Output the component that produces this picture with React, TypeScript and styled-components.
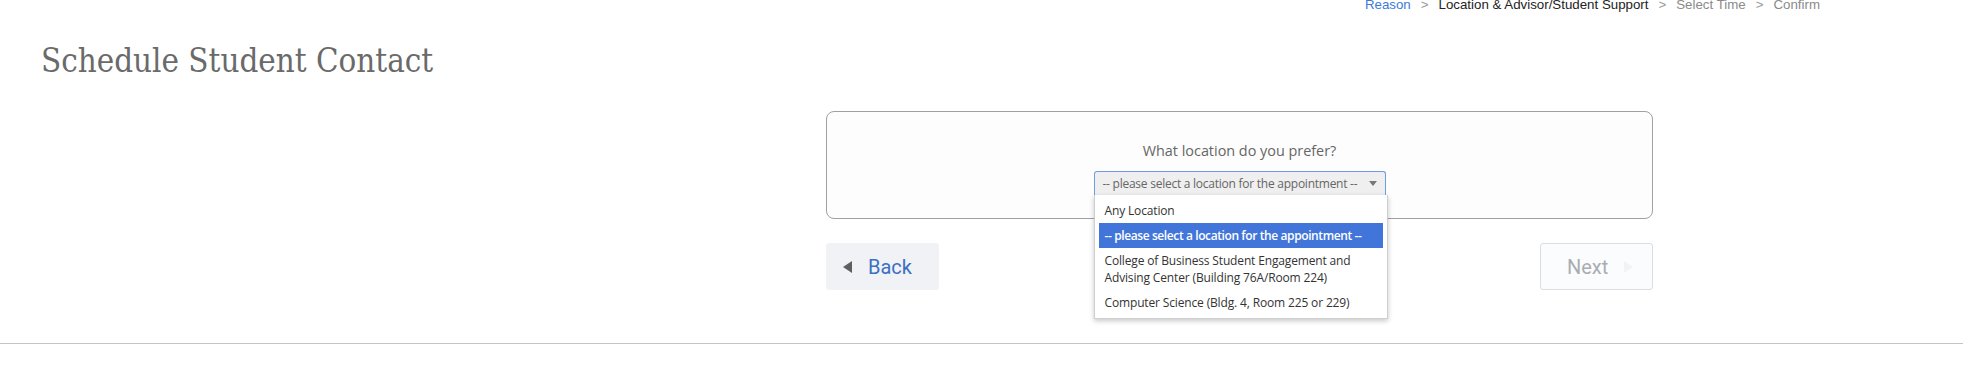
import React from 'react';
import styled, { createGlobalStyle } from 'styled-components';

const GlobalStyle = createGlobalStyle`
  html, body {
    margin: 0;
    padding: 0;
    background: #ffffff;
  }
  * {
    box-sizing: border-box;
  }
`;

const Page = styled.div`
  width: 1963px;
  height: 373px;
  overflow: hidden;
  font-family: 'Open Sans', sans-serif;
`;

const Breadcrumb = styled.nav`
  display: flex;
  justify-content: flex-end;
  margin-top: -3px;
  padding-right: 143px;
  font-family: 'Liberation Sans', Arial, sans-serif;
  font-size: 13.3px;
  line-height: 15px;
`;

const Crumb = styled.span<{ $state: 'done' | 'current' | 'todo' }>`
  color: ${(p) => (p.$state === 'done' ? '#3b7ad9' : p.$state === 'current' ? '#222222' : '#8a8a8a')};
`;

const Sep = styled.span`
  margin: 0 10px;
  color: #999999;
`;

const Title = styled.h1`
  margin: 29px 0 0 41px;
  font-family: 'DejaVu Serif Condensed', 'DejaVu Serif', serif;
  font-stretch: semi-condensed;
  font-weight: normal;
  font-size: 32.8px;
  line-height: 40px;
  color: #6a6a6a;
`;

const Main = styled.div`
  width: 827px;
  margin: 30px 0 0 826px;
`;

const Card = styled.div`
  border: 1px solid #a0a0a0;
  border-radius: 8px;
  background: #fdfdfd;
  padding: 29px 0 23px;
  display: flex;
  flex-direction: column;
  align-items: center;
`;

const Question = styled.div`
  font-size: 14.4px;
  line-height: 20px;
  color: #666666;
`;

const SelectWrap = styled.div`
  position: relative;
  margin-top: 10px;
  width: 292px;
`;

const SelectBox = styled.div`
  height: 24px;
  display: flex;
  align-items: center;
  justify-content: space-between;
  padding: 0 8px 0 8px;
  background: #efefef;
  border: 1px solid #6d9be6;
  border-bottom: none;
  border-radius: 3px 3px 0 0;
  font-size: 12px;
  letter-spacing: -0.25px;
  white-space: nowrap;
  color: #666666;
`;

const Caret = styled.span`
  width: 0;
  height: 0;
  border-left: 4px solid transparent;
  border-right: 4px solid transparent;
  border-top: 5px solid #777777;
`;

const Menu = styled.ul`
  position: absolute;
  top: 100%;
  left: 0;
  width: 294px;
  margin: 0;
  padding: 3px 4px 3px;
  list-style: none;
  background: #ffffff;
  border: 1px solid #cfcfcf;
  border-top: none;
  box-shadow: 0 2px 5px rgba(0, 0, 0, 0.22);
  z-index: 10;
`;

const Option = styled.li<{ $active?: boolean }>`
  padding: 4px 6px;
  font-size: 12px;
  line-height: 17px;
  white-space: ${(p) => (p.$active ? 'nowrap' : 'normal')};
  color: ${(p) => (p.$active ? '#ffffff' : '#333333')};
  background: ${(p) => (p.$active ? '#4275d9' : 'transparent')};
  font-weight: ${(p) => (p.$active ? 600 : 400)};
  letter-spacing: ${(p) => (p.$active ? '-0.4px' : '-0.15px')};
`;

const Actions = styled.div`
  display: flex;
  justify-content: space-between;
  margin-top: 24px;
`;

const NavButton = styled.button<{ $disabled?: boolean }>`
  height: 47px;
  width: 113px;
  display: flex;
  align-items: center;
  gap: 16px;
  border-radius: 3px;
  font-family: Roboto, sans-serif;
  font-size: 20px;
  cursor: pointer;
  border: 1px solid ${(p) => (p.$disabled ? '#dadde1' : '#f0f2f5')};
  background: ${(p) => (p.$disabled ? '#fbfcfd' : '#f0f2f5')};
  color: ${(p) => (p.$disabled ? '#a9adb3' : '#3b6fc3')};
  padding: ${(p) => (p.$disabled ? '0 0 0 26px' : '0 0 0 16px')};
`;

const Arrow = styled.span<{ $dir: 'left' | 'right'; $faint?: boolean }>`
  width: 0;
  height: 0;
  border-top: 6px solid transparent;
  border-bottom: 6px solid transparent;
  ${(p) =>
    p.$dir === 'left'
      ? `border-right: 9px solid ${p.$faint ? '#f1f3f6' : '#5f5f5f'};`
      : `border-left: 9px solid ${p.$faint ? '#f1f3f6' : '#5f5f5f'};`}
`;

const Rule = styled.hr`
  margin: 53px 0 0;
  border: none;
  border-top: 1px solid #c4c4c4;
`;

const App: React.FC = () => {
  return (
    <Page>
      <GlobalStyle />
      <Breadcrumb>
        <Crumb $state="done">Reason</Crumb>
        <Sep>&gt;</Sep>
        <Crumb $state="current">Location &amp; Advisor/Student Support</Crumb>
        <Sep>&gt;</Sep>
        <Crumb $state="todo">Select Time</Crumb>
        <Sep>&gt;</Sep>
        <Crumb $state="todo">Confirm</Crumb>
      </Breadcrumb>
      <Title>Schedule Student Contact</Title>
      <Main>
        <Card>
          <Question>What location do you prefer?</Question>
          <SelectWrap>
            <SelectBox>
              <span>-- please select a location for the appointment --</span>
              <Caret />
            </SelectBox>
            <Menu>
              <Option>Any Location</Option>
              <Option $active>-- please select a location for the appointment --</Option>
              <Option>College of Business Student Engagement and Advising Center (Building 76A/Room 224)</Option>
              <Option>Computer Science (Bldg. 4, Room 225 or 229)</Option>
            </Menu>
          </SelectWrap>
        </Card>
        <Actions>
          <NavButton>
            <Arrow $dir="left" />
            Back
          </NavButton>
          <NavButton $disabled>
            Next
            <Arrow $dir="right" $faint />
          </NavButton>
        </Actions>
      </Main>
      <Rule />
    </Page>
  );
};

export default App;
